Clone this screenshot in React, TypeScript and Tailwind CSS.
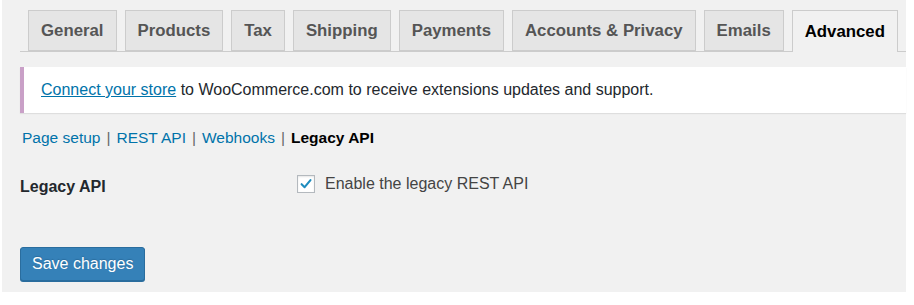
const tabs = ["General", "Products", "Tax", "Shipping", "Payments", "Accounts & Privacy", "Emails", "Advanced"];

function Tab({ label, active }: { label: string; active?: boolean }) {
  return (
    <a
      className={
        active
          ? "-mb-px flex h-[42px] shrink-0 items-center whitespace-nowrap border border-b-0 border-[#cccccc] bg-[#f1f1f1] px-[12px] text-[16.8px] font-bold text-black"
          : "flex h-[41px] shrink-0 items-center whitespace-nowrap border border-[#cccccc] bg-[#e5e5e5] px-[12px] text-[16.8px] font-bold text-[#555555]"
      }
    >
      {label}
    </a>
  );
}

export default function App() {
  return (
    <div className="h-[305px] w-[914px] overflow-hidden bg-white font-['Liberation_Sans',Arial,sans-serif]">
      <div className="ml-[2px] h-[292px] w-[904px] bg-[#f1f1f1] pl-[18px]">
        <nav className="flex gap-[8px] border-b border-[#cccccc] pl-[8px] pt-[10px]">
          {tabs.map((t) => (
            <Tab key={t} label={t} active={t === "Advanced"} />
          ))}
        </nav>

        <div className="mt-[15px] flex h-[46px] items-center border-l-4 border-[#c9a0c7] bg-white pl-[17px] text-[16px] text-[#23282d] shadow-[0_1px_1px_rgba(0,0,0,0.08)]">
          <a className="text-[#0073aa] underline">Connect your store</a>
          <span>&nbsp;to WooCommerce.com to receive extensions updates and support.</span>
        </div>

        <ul className="mt-[13px] flex items-center pl-[2px] text-[15.5px] text-[#666666]">
          <li>
            <a className="text-[#0073aa]">Page setup</a>
            <span className="px-[6px]">|</span>
          </li>
          <li>
            <a className="text-[#0073aa]">REST API</a>
            <span className="px-[6px]">|</span>
          </li>
          <li>
            <a className="text-[#0073aa]">Webhooks</a>
            <span className="px-[6px]">|</span>
          </li>
          <li>
            <a className="font-bold text-black">Legacy API</a>
          </li>
        </ul>

        <div className="mt-[23px] flex items-start">
          <div className="w-[277px] pt-[3px] text-[16px] font-bold text-[#23282d]">Legacy API</div>
          <label className="flex items-center gap-[10px] text-[16px] text-[#444444]">
            <span className="flex h-[18px] w-[18px] items-center justify-center border border-[#b4b9be] bg-white shadow-[inset_0_1px_2px_rgba(0,0,0,0.1)]">
              <svg viewBox="0 0 20 20" className="h-[18px] w-[18px]">
                <path d="M4.5 10.2 L8.3 14 L15.6 5.2" fill="none" stroke="#1e8cbe" strokeWidth="2.6" strokeLinecap="round" strokeLinejoin="round" />
              </svg>
            </span>
            <span>Enable the legacy REST API</span>
          </label>
        </div>

        <button className="mt-[48px] flex h-[34px] items-center rounded-[3px] border border-[#2a6d9e] bg-[#3581b8] px-[11px] text-[16px] text-white shadow-[0_1px_0_#2a6d9e] [text-shadow:0_-1px_1px_#2a6d9e]">
          Save changes
        </button>
      </div>
    </div>
  );
}
